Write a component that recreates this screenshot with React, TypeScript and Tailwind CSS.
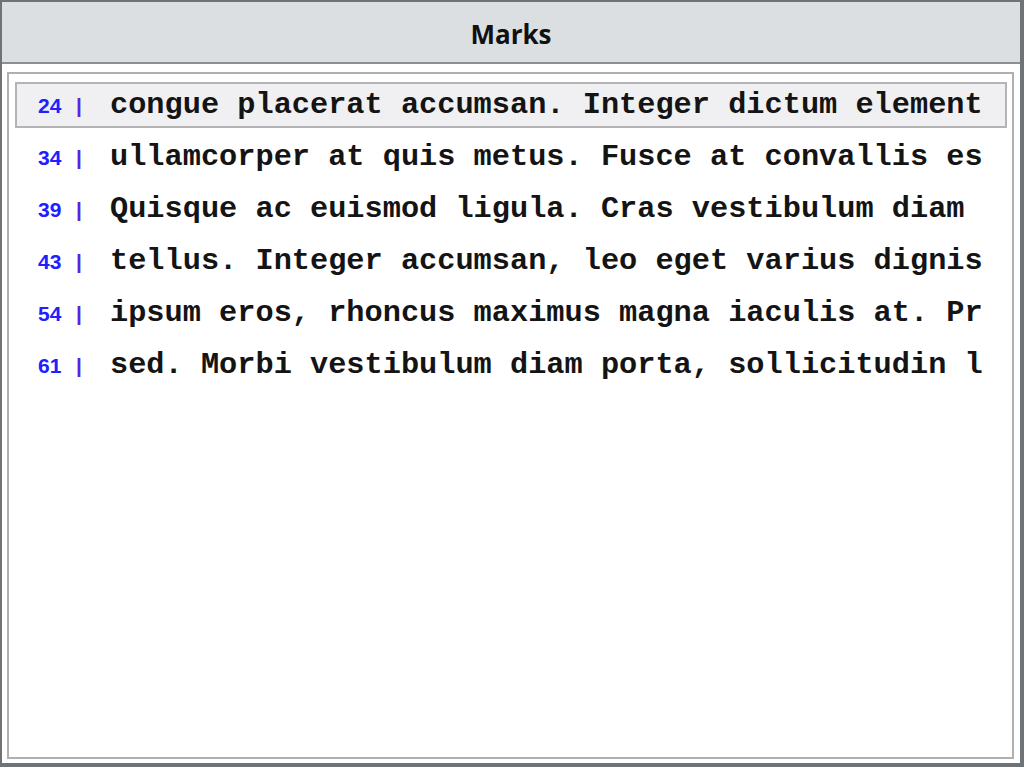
import React from "react";

type Mark = { line: number; text: string };

const marks: Mark[] = [
  { line: 24, text: "congue placerat accumsan. Integer dictum elementum nisi, vitae" },
  { line: 34, text: "ullamcorper at quis metus. Fusce at convallis est, sed tempor" },
  { line: 39, text: "Quisque ac euismod ligula. Cras vestibulum diam a lectus" },
  { line: 43, text: "tellus. Integer accumsan, leo eget varius dignissim, felis" },
  { line: 54, text: "ipsum eros, rhoncus maximus magna iaculis at. Praesent sed" },
  { line: 61, text: "sed. Morbi vestibulum diam porta, sollicitudin lorem nec" },
];

const App: React.FC = () => {
  const selected = 0;

  return (
    <div className="w-[1024px] h-[767px] flex flex-col bg-white border-l-2 border-t-2 border-r-4 border-b-4 border-[#6d7377] overflow-hidden">
      {/* ----- header ----- */}
      <div className="h-[62px] shrink-0 flex items-center justify-center bg-[#dcdfe2] border-b-2 border-[#8b9094]">
        <h4
          className="text-[26px] font-bold text-[#111] leading-none pt-[4px]"
          style={{ fontFamily: '"Open Sans", "Noto Sans", sans-serif' }}
        >
          Marks
        </h4>
      </div>

      {/* ----- list ----- */}
      <div className="flex-1 min-w-0 flex pt-[8px] pl-[5px] pr-[6px] pb-[4px]">
        <div className="flex-1 min-w-0 border-2 border-[#b0b0b0] pt-[8px] pl-[6px] pr-[5px]">
          <ul className="flex flex-col gap-[6px] min-w-0">
            {marks.map((m, i) => (
              <li
                key={m.line}
                className={
                  i === selected
                    ? "h-[46px] min-w-0 flex items-center pl-[21px] pr-[22px] border-2 border-[#b4b4b6] bg-[#f0f0f2]"
                    : "h-[46px] min-w-0 flex items-center pl-[21px] pr-[22px] border-2 border-transparent"
                }
              >
                <span
                  className="w-[38px] shrink-0 text-[21px] font-bold text-[#2020ff] leading-none"
                  style={{ fontFamily: '"Liberation Sans", Arial, sans-serif' }}
                >
                  {m.line}
                </span>
                <span
                  className="w-[34px] shrink-0 text-[21px] font-bold text-[#5a22e0] leading-none"
                  style={{ fontFamily: '"Liberation Sans", Arial, sans-serif' }}
                >
                  |
                </span>
                <span
                  className="flex-1 min-w-0 overflow-hidden whitespace-nowrap text-[30.3px] font-bold text-[#141414] leading-none"
                  style={{ fontFamily: '"Liberation Mono", "Courier New", monospace' }}
                >
                  {m.text}
                </span>
              </li>
            ))}
          </ul>
        </div>
      </div>
    </div>
  );
};

export default App;
